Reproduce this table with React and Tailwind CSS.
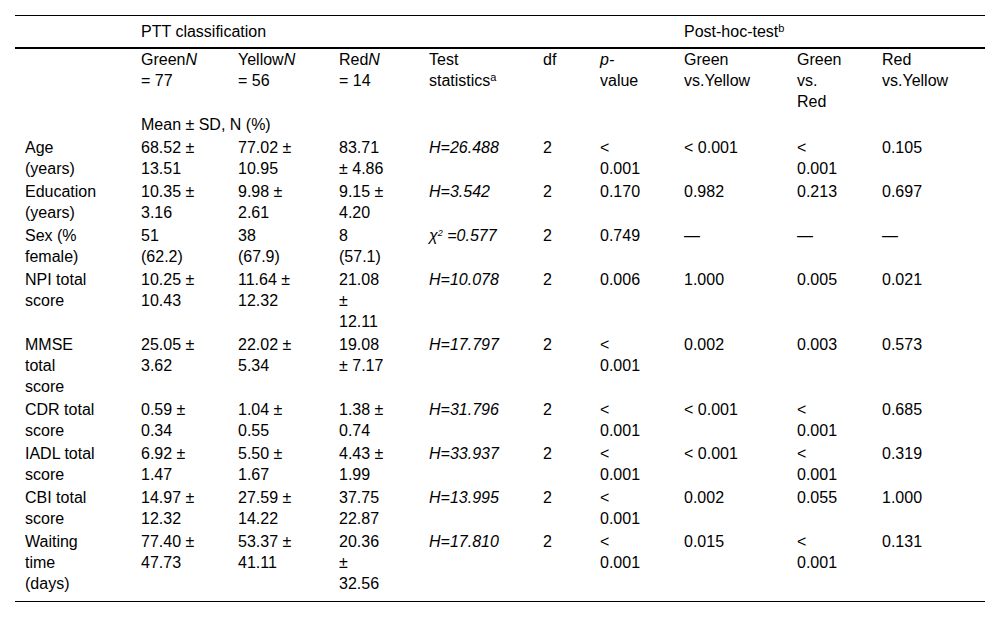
import React from "react";

const COLS = "grid grid-cols-[116px_97px_101px_90px_114px_57px_84px_113px_85px_113px]";

const I = ({ children }) => <span className="italic">{children}</span>;

const Cell = ({ lines, className = "" }) => (
  <div className={"pl-[10px] whitespace-nowrap " + className}>
    {lines.map((l, i) => (
      <div key={i}>{l}</div>
    ))}
  </div>
);

const rows = [
  {
    label: ["Age", "(years)"],
    g: ["68.52 ±", "13.51"],
    y: ["77.02 ±", "10.95"],
    r: ["83.71", "± 4.86"],
    t: "H=26.488",
    p: ["<", "0.001"],
    gy: ["< 0.001"],
    gr: ["<", "0.001"],
    ry: ["0.105"],
  },
  {
    label: ["Education", "(years)"],
    g: ["10.35 ±", "3.16"],
    y: ["9.98 ±", "2.61"],
    r: ["9.15 ±", "4.20"],
    t: "H=3.542",
    p: ["0.170"],
    gy: ["0.982"],
    gr: ["0.213"],
    ry: ["0.697"],
  },
  {
    label: ["Sex (%", "female)"],
    g: ["51", "(62.2)"],
    y: ["38", "(67.9)"],
    r: ["8", "(57.1)"],
    t: "chi",
    p: ["0.749"],
    gy: ["—"],
    gr: ["—"],
    ry: ["—"],
  },
  {
    label: ["NPI total", "score"],
    g: ["10.25 ±", "10.43"],
    y: ["11.64 ±", "12.32"],
    r: ["21.08", "±", "12.11"],
    t: "H=10.078",
    p: ["0.006"],
    gy: ["1.000"],
    gr: ["0.005"],
    ry: ["0.021"],
  },
  {
    label: ["MMSE", "total", "score"],
    g: ["25.05 ±", "3.62"],
    y: ["22.02 ±", "5.34"],
    r: ["19.08", "± 7.17"],
    t: "H=17.797",
    p: ["<", "0.001"],
    gy: ["0.002"],
    gr: ["0.003"],
    ry: ["0.573"],
  },
  {
    label: ["CDR total", "score"],
    g: ["0.59 ±", "0.34"],
    y: ["1.04 ±", "0.55"],
    r: ["1.38 ±", "0.74"],
    t: "H=31.796",
    p: ["<", "0.001"],
    gy: ["< 0.001"],
    gr: ["<", "0.001"],
    ry: ["0.685"],
  },
  {
    label: ["IADL total", "score"],
    g: ["6.92 ±", "1.47"],
    y: ["5.50 ±", "1.67"],
    r: ["4.43 ±", "1.99"],
    t: "H=33.937",
    p: ["<", "0.001"],
    gy: ["< 0.001"],
    gr: ["<", "0.001"],
    ry: ["0.319"],
  },
  {
    label: ["CBI total", "score"],
    g: ["14.97 ±", "12.32"],
    y: ["27.59 ±", "14.22"],
    r: ["37.75", "22.87"],
    t: "H=13.995",
    p: ["<", "0.001"],
    gy: ["0.002"],
    gr: ["0.055"],
    ry: ["1.000"],
  },
  {
    label: ["Waiting", "time", "(days)"],
    g: ["77.40 ±", "47.73"],
    y: ["53.37 ±", "41.11"],
    r: ["20.36", "±", "32.56"],
    t: "H=17.810",
    p: ["<", "0.001"],
    gy: ["0.015"],
    gr: ["<", "0.001"],
    ry: ["0.131"],
  },
];

export default function App() {
  return (
    <div className="w-[1000px] h-[617px] bg-white px-[15px] pt-[15px] text-black font-['Liberation_Sans',Arial,sans-serif] text-[16px] leading-[21px]">
      <div className="w-[970px] border-t border-black">
        {/* header row 1 */}
        <div className={COLS + " h-[33px] items-center border-b-2 border-black"}>
          <div />
          <div className="col-span-6 pl-[10px]">PTT classification</div>
          <div className="col-span-3 pl-[10px]">
            Post-hoc-test<sup className="text-[11px]">b</sup>
          </div>
        </div>
        {/* header row 2 */}
        <div className={COLS + " pb-[1px]"}>
          <div />
          <Cell lines={[<>Green<I>N</I></>, "= 77"]} />
          <Cell lines={[<>Yellow<I>N</I></>, "= 56"]} />
          <Cell lines={[<>Red<I>N</I></>, "= 14"]} />
          <Cell lines={["Test", <>statistics<sup className="text-[11px]">a</sup></>]} />
          <Cell lines={["df"]} />
          <Cell lines={[<I>p-</I>, "value"]} />
          <Cell lines={["Green", "vs.Yellow"]} />
          <Cell lines={["Green", "vs.", "Red"]} />
          <Cell lines={["Red", "vs.Yellow"]} />
        </div>
        {/* mean row */}
        <div className={COLS + " py-[1px]"}>
          <div />
          <div className="col-span-9 pl-[10px]">Mean ± SD, N (%)</div>
        </div>
        {rows.map((r, i) => (
          <div key={i} className={COLS + " py-[1px]"}>
            <Cell lines={r.label} />
            <Cell lines={r.g} />
            <Cell lines={r.y} />
            <Cell lines={r.r} />
            <div className="pl-[10px] whitespace-nowrap italic">
              {r.t === "chi" ? (
                <>
                  χ<sup className="text-[9px] -top-[5px]">2</sup> =0.577
                </>
              ) : (
                r.t
              )}
            </div>
            <Cell lines={["2"]} />
            <Cell lines={r.p} />
            <Cell lines={r.gy} />
            <Cell lines={r.gr} />
            <Cell lines={r.ry} />
          </div>
        ))}
        <div className="h-[7px] border-b border-black" />
      </div>
    </div>
  );
}
